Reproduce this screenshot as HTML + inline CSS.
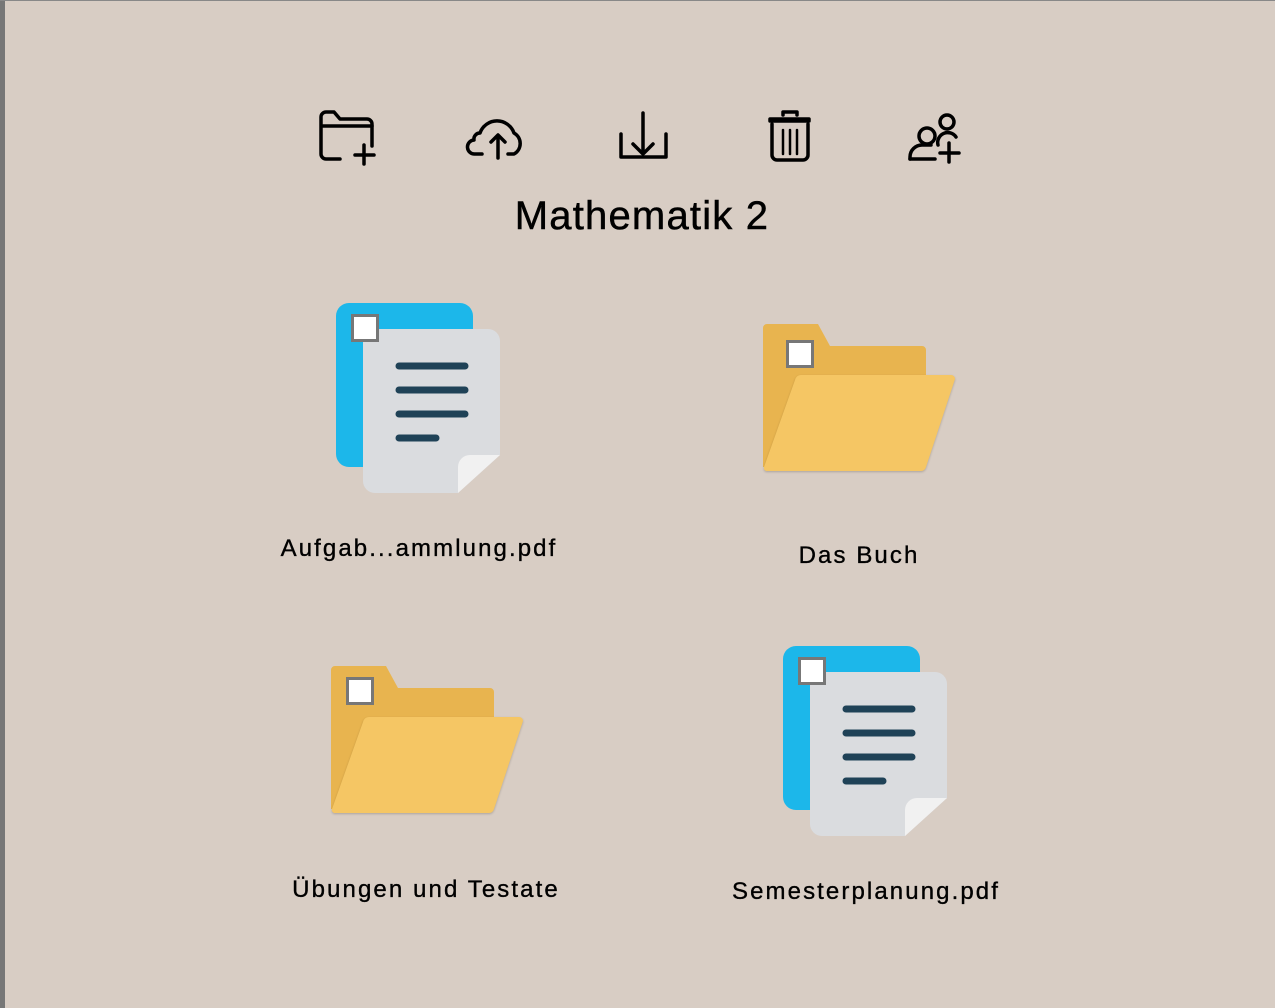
<!DOCTYPE html>
<html><head><style>
body{margin:0;width:1275px;height:1008px;background:#d8cdc4;position:relative;overflow:hidden;font-family:"Liberation Sans","DejaVu Sans",sans-serif;}
.lb{position:absolute;left:0;top:0;width:5px;height:1008px;background:#777;}
.tb{position:absolute;left:0;top:0;width:1275px;height:1px;background:#888;}
.t{position:absolute;color:#000;white-space:nowrap;transform:translateX(-50%);font-size:24px;letter-spacing:2.1px;-webkit-text-stroke:0.35px #000;}
svg{position:absolute;overflow:visible}
</style></head><body>
<div class="lb"></div><div class="tb"></div>

<svg style="left:0;top:0" width="1275" height="200" fill="none" stroke="#000" stroke-width="3.5" stroke-linecap="round" stroke-linejoin="round">
 <path d="M340 159H326a5 5 0 0 1-5-5V117a5 5 0 0 1 5-5h8l6 7h27a5 5 0 0 1 5 5v22"/>
 <path d="M323 126h49"/>
 <path d="M364 145v19M355 155h19"/>
 <path d="M482 154h-7a7 7 0 0 1-1-14 6 6 0 0 1 6-7 18 18 0 0 1 34 0 12 12 0 0 1 0 21h-6"/>
 <path d="M498 158v-22M491 142l7-7 7 7"/>
 <path d="M643 113v40M633 144l10 10 10-10"/>
 <path d="M621 134v23h45v-23"/>
 <path d="M770 119h39v2h-39z"/>
 <path d="M783 115v-3h14v3"/>
 <path d="M772 124v31a5 5 0 0 0 5 5h26a5 5 0 0 0 5-5v-31"/>
 <path d="M783 130v24M790 130v24M797 130v24" stroke-width="2.5"/>
 <circle cx="947" cy="122" r="7"/>
 <circle cx="927" cy="136" r="8"/>
 <path d="M910 159v-2a12 12 0 0 1 12-12h9"/>
 <path d="M910 159h25"/>
 <path d="M938 145a10 10 0 0 1 18-8"/>
 <path d="M949 143v19M940 153h19"/>
</svg>

<div class="t" style="left:642px;top:194px;font-size:40px;letter-spacing:1.2px;-webkit-text-stroke:0.5px #000">Mathematik 2</div>

<svg style="left:336px;top:303px" width="170" height="195">
 <rect x="0" y="0" width="137" height="164" rx="13" fill="#1cb7ea"/>
 <path d="M39 26h113a12 12 0 0 1 12 12v114l-42 38H39a12 12 0 0 1-12-12V38a12 12 0 0 1 12-12z" fill="#dadcdf"/>
 <path d="M164 152l-42 38v-26a12 12 0 0 1 12-12z" fill="#f1f1f1"/>
 <g stroke="#1f4257" stroke-width="7" stroke-linecap="round"><path d="M63 63h66M63 87h66M63 111h66M63 135h37"/></g>
 <rect x="16.5" y="12.5" width="25" height="25" fill="#fff" stroke="#777" stroke-width="3"/>
</svg>
<svg style="left:783px;top:646px" width="170" height="195">
 <rect x="0" y="0" width="137" height="164" rx="13" fill="#1cb7ea"/>
 <path d="M39 26h113a12 12 0 0 1 12 12v114l-42 38H39a12 12 0 0 1-12-12V38a12 12 0 0 1 12-12z" fill="#dadcdf"/>
 <path d="M164 152l-42 38v-26a12 12 0 0 1 12-12z" fill="#f1f1f1"/>
 <g stroke="#1f4257" stroke-width="7" stroke-linecap="round"><path d="M63 63h66M63 87h66M63 111h66M63 135h37"/></g>
 <rect x="16.5" y="12.5" width="25" height="25" fill="#fff" stroke="#777" stroke-width="3"/>
</svg>

<svg style="left:763px;top:324px" width="200" height="155">
 <path d="M4 0h51l12 22h92a4 4 0 0 1 4 4v117H0V4a4 4 0 0 1 4-4z" fill="#e8b44f"/>
 <path d="M38 51h150a4 4 0 0 1 4 4l-29 88a5 5 0 0 1-5 4H4a3 3 0 0 1-3-4l31-87a6 6 0 0 1 6-5z" fill="#f5c664" style="filter:drop-shadow(0 1px 1px rgba(0,0,0,.2))"/>
 <rect x="24.5" y="17.5" width="25" height="25" fill="#fff" stroke="#777" stroke-width="3"/>
</svg>
<svg style="left:331px;top:666px" width="200" height="155">
 <path d="M4 0h51l12 22h92a4 4 0 0 1 4 4v117H0V4a4 4 0 0 1 4-4z" fill="#e8b44f"/>
 <path d="M38 51h150a4 4 0 0 1 4 4l-29 88a5 5 0 0 1-5 4H4a3 3 0 0 1-3-4l31-87a6 6 0 0 1 6-5z" fill="#f5c664" style="filter:drop-shadow(0 1px 1px rgba(0,0,0,.2))"/>
 <rect x="16.5" y="12.5" width="25" height="25" fill="#fff" stroke="#777" stroke-width="3"/>
</svg>

<div class="t" style="left:419px;top:535px">Aufgab...ammlung.pdf</div>
<div class="t" style="left:859px;top:542px">Das Buch</div>
<div class="t" style="left:426px;top:876px">Übungen und Testate</div>
<div class="t" style="left:866px;top:878px">Semesterplanung.pdf</div>
</body></html>
